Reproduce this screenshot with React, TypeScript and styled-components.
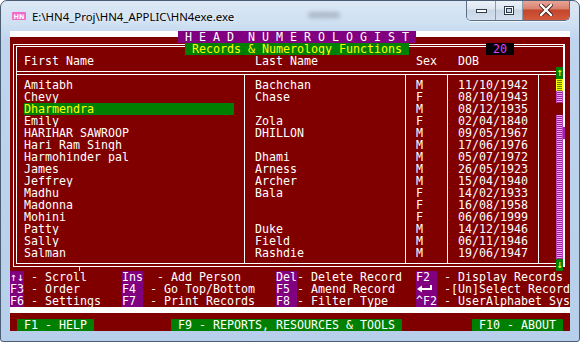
import React from "react";
import styled, { createGlobalStyle, css } from "styled-components";

const CW = 7;
const RH = 12;
const RED = "#800000";
const WHITE = "#ffffff";
const PURPLE = "#800080";
const GREEN = "#008000";
const YELLOW = "#ffff00";

const Global = createGlobalStyle`
  html, body { margin: 0; padding: 0; background: #ffffff; overflow: hidden; }
  #root { width: 580px; height: 342px; }
`;

const Window = styled.div`
  box-sizing: border-box;
  width: 580px;
  height: 342px;
  border: 1px solid #4a5d73;
  border-radius: 7px 7px 3px 3px;
  background: linear-gradient(to bottom, #dce8f5 0px, #cfe0f2 22px, #bfd5ee 40px, #b7cfea 100%);
  display: flex;
  flex-direction: column;
  overflow: hidden;
`;

const TitleBar = styled.div`
  height: 30px;
  display: flex;
  align-items: flex-start;
  padding-left: 10px;
`;

const Icon = styled.svg`
  width: 16px;
  height: 10px;
  margin-top: 10px;
  flex: none;
`;

const TitleText = styled.div`
  margin-top: 8px;
  margin-left: 5px;
  font-family: "Noto Sans", "Open Sans", sans-serif;
  font-size: 11.4px;
  line-height: 16px;
  color: #000000;
  white-space: nowrap;
  text-shadow: 0 0 6px rgba(255, 255, 255, 0.9);
`;

const Blur = styled.div`
  margin-top: 11px;
  margin-left: 74px;
  width: 32px;
  height: 6px;
  border-radius: 3px;
  background: #a9b7c6;
  filter: blur(2px);
`;

const Spacer = styled.div`
  flex: 1;
`;

const Buttons = styled.div`
  display: flex;
  margin-top: -1px;
  margin-right: 9px;
  border: 1px solid #5c6f86;
  border-top: none;
  border-radius: 0 0 5px 5px;
  overflow: hidden;
  height: 20px;
  box-shadow: 0 1px 0 rgba(255, 255, 255, 0.7);
`;

const WinBtn = styled.div<{ $w: number; $close?: boolean }>`
  width: ${(p) => p.$w}px;
  height: 20px;
  display: flex;
  align-items: center;
  justify-content: center;
  border-left: ${(p) => (p.$close ? "1px solid #5c6f86" : "none")};
  & + & { border-left: 1px solid #8a9bb0; }
  background: ${(p) =>
    p.$close
      ? "linear-gradient(to bottom, #e9a99b 0%, #d9806e 45%, #c2452c 50%, #d45a3c 100%)"
      : "linear-gradient(to bottom, #eef3f9 0%, #dde6f1 45%, #c9d6e5 50%, #d4e0ee 100%)"};
`;

const Console = styled.div`
  margin: 0 9px;
  width: ${80 * CW}px;
  height: ${25 * RH}px;
  background: ${RED};
  font-family: "DejaVu Sans Mono", "Liberation Mono", monospace;
  font-size: 11.63px;
  line-height: ${RH}px;
  color: ${WHITE};
  display: flex;
  flex-direction: column;
`;

const Row = styled.div`
  display: flex;
  height: ${RH}px;
  flex: none;
`;

type LineKind =
  | "half"
  | "hh"
  | "vv"
  | "v"
  | "tl"
  | "tr"
  | "bl"
  | "br"
  | "lt"
  | "rt"
  | "rtMark"
  | "hhT"
  | "rb"
  | "rbTick"
  | "none";

const ln = (x: number | string, y: number | string, w: number | string, h: number | string, c: string = WHITE) =>
  `linear-gradient(${c}, ${c}) ${x} ${y} / ${w} ${h} no-repeat`;

const H1 = 1;
const H2 = 3;
const M1 = 4;
const M2 = 7;
const B1 = 4;
const B2 = 7;
const V1 = 3;
const V2 = 6;

const lineBg = (k: LineKind, bg: string) => {
  const px = (n: number) => `${n}px`;
  switch (k) {
    case "half":
      return `linear-gradient(${WHITE}, ${WHITE}) 0 0 / 100% 6px no-repeat, ${bg}`;
    case "hh":
      return `${ln(0, px(H1), "100%", "1px")}, ${ln(0, px(H2), "100%", "1px")}, ${bg}`;
    case "hhT":
      return `${ln(0, px(M1), "100%", "1px")}, ${ln(0, px(M2), "100%", "1px")}, ${bg}`;
    case "rb":
      return `${ln(0, px(B1), "100%", "1px")}, ${ln(0, px(B2), "100%", "1px")}, ${bg}`;
    case "rbTick":
      return `${ln(0, px(B1), "100%", "1px")}, ${ln(0, px(B2), "100%", "1px")}, ${ln("6px", px(B2), "1px", "100%")}, ${bg}`;
    case "vv":
      return `${ln(px(V1), 0, "1px", "100%")}, ${ln(px(V2), 0, "1px", "100%")}, ${bg}`;
    case "v":
      return `${ln("3px", 0, "1px", "100%")}, ${bg}`;
    case "rt":
      return `${ln(0, 0, "2px", "100%")}, ${bg}`;
    case "rtMark":
      return `${ln(0, 0, "2px", "100%", "#a020b0")}, ${bg}`;
    case "tl":
      return `${ln(px(V1), px(H1), "100%", "1px")}, ${ln(px(V2), px(H2), "100%", "1px")}, ${ln(px(V1), px(H1), "1px", "100%")}, ${ln(px(V2), px(H2), "1px", "100%")}, ${bg}`;
    case "tr":
      return `${ln(0, px(H1), "2px", "1px")}, ${ln(0, px(H2), "2px", "1px")}, ${ln(0, px(H1), "2px", "100%")}, ${bg}`;
    case "lt":
      return `${ln(px(V1), 0, "1px", "100%")}, ${ln(px(V2), 0, "1px", "100%")}, ${ln(px(V2), px(M1), "100%", "1px")}, ${ln(px(V2), px(M2), "100%", "1px")}, ${bg}`;
    case "bl":
      return `${ln(px(V1), 0, "1px", px(B2 + 1))}, ${ln(px(V2), 0, "1px", px(B1 + 1))}, ${ln(px(V1), px(B2), "100%", "1px")}, ${ln(px(V2), px(B1), "100%", "1px")}, ${bg}`;
    case "br":
      return `${ln(0, px(B1), "2px", "1px")}, ${ln(0, px(B2), "2px", "1px")}, ${ln(0, 0, "2px", px(B2 + 1))}, ${bg}`;
    default:
      return bg;
  }
};

const Cell = styled.span<{ $w: number; $bg?: string; $fg?: string; $line?: LineKind }>`
  flex: none;
  display: block;
  width: ${(p) => p.$w * CW}px;
  height: ${RH}px;
  overflow: hidden;
  white-space: pre;
  color: ${(p) => p.$fg || WHITE};
  background: ${(p) => lineBg(p.$line || "none", p.$bg || RED)};
`;

const SepCell = styled.span<{ $top?: boolean }>`
  flex: none;
  display: block;
  width: ${CW}px;
  height: ${RH}px;
  background: ${(p) =>
    p.$top
      ? `${ln(0, `${M1}px`, "100%", "1px")}, ${ln(0, `${M2}px`, "100%", "1px")}, ${ln("3px", `${M2}px`, "1px", "100%")}, ${RED}`
      : `${ln("3px", 0, "1px", "100%")}, ${RED}`};
`;

const BottomSep = styled.span`
  flex: none;
  display: block;
  width: ${CW}px;
  height: ${RH}px;
  background: ${ln(0, `${B1}px`, "100%", "1px")}, ${ln(0, `${B2}px`, "100%", "1px")}, ${ln("3px", 0, "1px", `${B1}px`)}, ${RED};
`;

type ScrollKind = "up" | "thumb" | "track" | "gap" | "down";

const Scroll = styled.span<{ $kind: ScrollKind }>`
  flex: none;
  display: flex;
  align-items: center;
  justify-content: center;
  width: ${CW}px;
  height: ${RH}px;
  box-sizing: border-box;
  color: ${YELLOW};
  font-size: 11px;
  ${(p) =>
    p.$kind === "up" || p.$kind === "down"
      ? css`
          background: ${GREEN};
        `
      : p.$kind === "thumb"
      ? css`
          background: repeating-linear-gradient(to bottom, #f0f000 0 1px, #6a8000 1px 2px);
          border-left: 1px solid ${YELLOW};
          border-right: 1px solid ${YELLOW};
          background-color: ${GREEN};
        `
      : p.$kind === "track"
      ? css`
          background: repeating-linear-gradient(to bottom, #e7a6f0 0 1px, #9c209c 1px 2px);
          border-left: 1px solid #c040c0;
          border-right: 1px solid #c040c0;
        `
      : css`
          background: ${RED};
        `}
`;

const Key = styled.span<{ $w: number }>`
  flex: none;
  display: flex;
  align-items: center;
  width: ${(p) => p.$w * CW}px;
  height: ${RH}px;
  background: ${PURPLE};
  color: ${WHITE};
  white-space: pre;
  overflow: hidden;
`;

const EnterIcon = styled.svg`
  width: 21px;
  height: 12px;
  display: block;
`;

type Person = { first: string; last: string; sex: string; dob: string; sel?: boolean };

const people: Person[] = [
  { first: "Amitabh", last: "Bachchan", sex: "M", dob: "11/10/1942" },
  { first: "Chevy", last: "Chase", sex: "F", dob: "08/10/1943" },
  { first: "Dharmendra", last: "", sex: "M", dob: "08/12/1935", sel: true },
  { first: "Emily", last: "Zola", sex: "F", dob: "02/04/1840" },
  { first: "HARIHAR SAWROOP", last: "DHILLON", sex: "M", dob: "09/05/1967" },
  { first: "Hari Ram Singh", last: "", sex: "M", dob: "17/06/1976" },
  { first: "Harmohinder pal", last: "Dhami", sex: "M", dob: "05/07/1972" },
  { first: "James", last: "Arness", sex: "M", dob: "26/05/1923" },
  { first: "Jeffrey", last: "Archer", sex: "M", dob: "15/04/1940" },
  { first: "Madhu", last: "Bala", sex: "F", dob: "14/02/1933" },
  { first: "Madonna", last: "", sex: "F", dob: "16/08/1958" },
  { first: "Mohini", last: "", sex: "F", dob: "06/06/1999" },
  { first: "Patty", last: "Duke", sex: "M", dob: "14/12/1946" },
  { first: "Sally", last: "Field", sex: "M", dob: "06/11/1946" },
  { first: "Salman", last: "Rashdie", sex: "M", dob: "19/06/1947" },
];

const scrollKinds: ScrollKind[] = [
  "thumb",
  "track",
  "gap",
  "track",
  "track",
  "track",
  "track",
  "track",
  "track",
  "track",
  "track",
  "track",
  "track",
  "track",
  "track",
];

const Enter = () => (
  <EnterIcon viewBox="0 0 21 12">
    <polygon points="1,6 6,2.5 6,9.5" fill="#ffffff" />
    <rect x="5" y="5" width="11" height="2" fill="#ffffff" />
    <rect x="14" y="2" width="2" height="5" fill="#ffffff" />
  </EnterIcon>
);

const Legend = ({
  k1,
  t1,
  k2,
  t2,
  k3,
  t3,
  k4,
  t4,
}: {
  k1: string;
  t1: string;
  k2: string;
  t2: string;
  k3: string;
  t3: string;
  k4: React.ReactNode;
  t4: string;
}) => (
  <Row>
    <Key $w={2}>{k1}</Key>
    <Cell $w={14}>{t1}</Cell>
    <Key $w={3}>{k2}</Key>
    <Cell $w={19}>{t2}</Cell>
    <Key $w={3}>{k3}</Key>
    <Cell $w={17}>{t3}</Cell>
    <Key $w={3}>{k4}</Key>
    <Cell $w={19}>{t4}</Cell>
  </Row>
);

export default function App() {
  return (
    <>
      <Global />
      <Window>
        <TitleBar>
          <Icon viewBox="0 0 16 10">
            <path d="M1 2 Q1 1 2 1 L14 1 Q15 1 15 2 L15 8 Q15 9 14 9 L2 9 Q1 9 1 8 Z" fill="#f06bc8" />
            <text x="8" y="7.5" fontSize="6.5" fontFamily="DejaVu Sans" fontWeight="bold" fill="#ffffff" textAnchor="middle">
              HN
            </text>
          </Icon>
          <TitleText>E:\HN4_Proj\HN4_APPLIC\HN4exe.exe</TitleText>
          <Blur />
          <Spacer />
          <Buttons>
            <WinBtn $w={28}>
              <svg width="11" height="6" viewBox="0 0 11 6">
                <rect x="0.5" y="2.5" width="10" height="3" fill="#ffffff" stroke="#2f3b4a" />
              </svg>
            </WinBtn>
            <WinBtn $w={26}>
              <svg width="10" height="9" viewBox="0 0 10 9">
                <rect x="0.5" y="0.5" width="9" height="8" fill="#ffffff" stroke="#2f3b4a" />
                <rect x="2.5" y="2.5" width="5" height="4" fill="#c9d6e5" stroke="#2f3b4a" />
              </svg>
            </WinBtn>
            <WinBtn $w={46} $close>
              <svg width="14" height="12" viewBox="0 0 14 12">
                <path d="M2 1 L12 11 M12 1 L2 11" stroke="#3a1a14" strokeWidth="4" strokeLinecap="square" />
                <path d="M2 1 L12 11 M12 1 L2 11" stroke="#ffffff" strokeWidth="2.4" strokeLinecap="square" />
              </svg>
            </WinBtn>
          </Buttons>
        </TitleBar>
        <Console>
          <Row>
            <Cell $w={24} $line="half" />
            <Cell $w={34} $bg={PURPLE}>{" H E A D  N U M E R O L O G I S T "}</Cell>
            <Cell $w={22} $line="half" />
          </Row>
          <Row>
            <Cell $w={1} $line="tl" />
            <Cell $w={24} $line="hh" />
            <Cell $w={32} $bg={GREEN} $fg={YELLOW}>{" Records & Numerology Functions "}</Cell>
            <Cell $w={11} $line="hh" />
            <Cell $w={4} $bg="#000000" $fg="#e040ff">{" 20 "}</Cell>
            <Cell $w={7} $line="hh" />
            <Cell $w={1} $line="tr" />
          </Row>
          <Row>
            <Cell $w={1} $line="vv" />
            <Cell $w={1} />
            <Cell $w={33}>First Name</Cell>
            <Cell $w={23}>Last Name</Cell>
            <Cell $w={6}>Sex</Cell>
            <Cell $w={15}>DOB</Cell>
            <Cell $w={1} $line="rt" />
          </Row>
          <Row>
            <Cell $w={1} $line="lt" />
            <Cell $w={32} $line="hhT" />
            <SepCell $top />
            <Cell $w={22} $line="hhT" />
            <SepCell $top />
            <Cell $w={5} $line="hhT" />
            <SepCell $top />
            <Cell $w={12} $line="hhT" />
            <SepCell $top />
            <Cell $w={2} $line="hhT" />
            <Scroll $kind="up">↑</Scroll>
            <Cell $w={1} $line="rt" />
          </Row>
          {people.map((p, i) => (
            <Row key={p.first}>
              <Cell $w={1} $line="vv" />
              <Cell $w={1} />
              <Cell $w={30} $bg={p.sel ? GREEN : RED} $fg={p.sel ? YELLOW : WHITE}>
                {p.first}
              </Cell>
              <Cell $w={1} />
              <SepCell />
              <Cell $w={1} />
              <Cell $w={21}>{p.last}</Cell>
              <SepCell />
              <Cell $w={1} />
              <Cell $w={4}>{p.sex}</Cell>
              <SepCell />
              <Cell $w={1} />
              <Cell $w={11}>{p.dob}</Cell>
              <SepCell />
              <Cell $w={2} />
              <Scroll $kind={scrollKinds[i]} />
              <Cell $w={1} $line={i === 4 ? "rtMark" : "rt"} />
            </Row>
          ))}
          <Row>
            <Cell $w={1} $line="bl" />
            <Cell $w={8} $line="rb" />
            <Cell $w={1} $line="rbTick" />
            <Cell $w={23} $line="rb" />
            <BottomSep />
            <Cell $w={22} $line="rb" />
            <BottomSep />
            <Cell $w={5} $line="rb" />
            <BottomSep />
            <Cell $w={12} $line="rb" />
            <BottomSep />
            <Cell $w={2} $line="rb" />
            <Scroll $kind="down">↓</Scroll>
            <Cell $w={1} $line="br" />
          </Row>
          <Legend
            k1="↑↓"
            t1=" - Scroll"
            k2="Ins"
            t2="  - Add Person"
            k3="Del"
            t3="- Delete Record"
            k4="F2 "
            t4=" - Display Records"
          />
          <Legend
            k1="F3"
            t1=" - Order"
            k2="F4 "
            t2=" - Go Top/Bottom"
            k3="F5 "
            t3="- Amend Record"
            k4={<Enter />}
            t4=" -[Un]Select Record"
          />
          <Legend
            k1="F6"
            t1=" - Settings"
            k2="F7 "
            t2=" - Print Records"
            k3="F8 "
            t3="- Filter Type"
            k4="^F2"
            t4=" - UserAlphabet Sys"
          />
          <Row>
            <Cell $w={80} $line="half" />
          </Row>
          <Row>
            <Cell $w={1} />
            <Cell $w={11} $bg={GREEN}>{" F1 - HELP "}</Cell>
            <Cell $w={11} />
            <Cell $w={33} $bg={GREEN}>{" F9 - REPORTS, RESOURCES & TOOLS "}</Cell>
            <Cell $w={10} />
            <Cell $w={13} $bg={GREEN}>{" F10 - ABOUT "}</Cell>
            <Cell $w={1} />
          </Row>
        </Console>
      </Window>
    </>
  );
}
